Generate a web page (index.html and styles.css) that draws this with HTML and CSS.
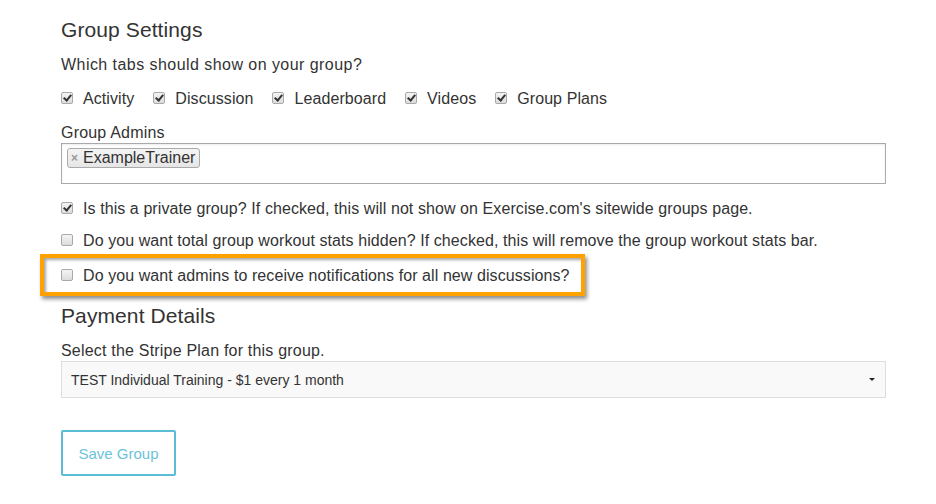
FILE: index.html
```html
<!DOCTYPE html>
<html>
<head>
<meta charset="utf-8">
<link rel="stylesheet" href="styles.css">
</head>
<body>
<div class="page">
  <h2 class="title">Group Settings</h2>
  <p class="label intro">Which tabs should show on your group?</p>
  <div class="tabs">
    <label class="check"><span class="box on"></span>Activity</label>
    <label class="check"><span class="box on"></span>Discussion</label>
    <label class="check"><span class="box on"></span>Leaderboard</label>
    <label class="check"><span class="box on"></span>Videos</label>
    <label class="check"><span class="box on"></span>Group Plans</label>
  </div>
  <p class="label admins">Group Admins</p>
  <div class="tagbox">
    <span class="tag"><span class="x">×</span>ExampleTrainer</span>
  </div>
  <label class="check row r1"><span class="box on"></span>Is this a private group? If checked, this will not show on Exercise.com's sitewide groups page.</label>
  <label class="check row r2"><span class="box"></span>Do you want total group workout stats hidden? If checked, this will remove the group workout stats bar.</label>
  <div class="highlight">
    <label class="check row"><span class="box"></span>Do you want admins to receive notifications for all new discussions?</label>
  </div>
  <h2 class="title pay">Payment Details</h2>
  <p class="label stripe">Select the Stripe Plan for this group.</p>
  <div class="select">
    <span>TEST Individual Training - $1 every 1 month</span>
    <span class="caret"></span>
  </div>
  <button class="save">Save Group</button>
</div>
</body>
</html>
```
FILE: styles.css
```css
* { box-sizing: border-box; }
body {
  margin: 0;
  background: #fff;
  font-family: "Liberation Sans", Arial, sans-serif;
  color: #333;
}
.page {
  padding: 15px 50px 0 61px;
}
.title {
  margin: 0;
  font-size: 21px;
  font-weight: normal;
  line-height: 30px;
  color: #333;
  letter-spacing: 0.1px;
}
.label {
  margin: 0;
  font-size: 16px;
  line-height: 20px;
  letter-spacing: 0.2px;
}
.intro { letter-spacing: 0.45px; }
.title + .label { margin-top: 10px; }
.tabs {
  display: flex;
  gap: 19px;
  margin-top: 14px;
  height: 20px;
}
.check {
  display: flex;
  align-items: center;
  font-size: 16px;
  line-height: 20px;
  letter-spacing: 0.08px;
}
.box {
  width: 12px;
  height: 12px;
  border: 1px solid #a9a9a9;
  border-radius: 2px;
  background: linear-gradient(#f4f4f4, #dcdcdc);
  margin-right: 10px;
  margin-top: -2px;
  position: relative;
  flex: none;
}
.box.on::after {
  content: "";
  position: absolute;
  left: 3px;
  top: 0px;
  width: 3px;
  height: 6px;
  border: solid #333;
  border-width: 0 2px 2px 0;
  transform: rotate(40deg);
}
.admins { margin-top: 14px; }
.tagbox {
  margin-top: 0;
  height: 41px;
  border: 1px solid #aaa;
  padding: 4px 5px;
  box-shadow: inset 0 1px 2px rgba(0,0,0,.08);
}
.tag {
  display: inline-flex;
  align-items: center;
  height: 20px;
  padding: 0 4px 0 3px;
  border: 1px solid #aaa;
  border-radius: 3px;
  background: linear-gradient(#f4f4f4, #e6e6e6);
  font-size: 16px;
  color: #333;
}
.tag .x {
  color: #999;
  font-weight: bold;
  font-size: 12px;
  margin-right: 5px;
}
.row { height: 20px; }
.r1 { margin-top: 15px; }
.r2 { margin-top: 12px; }
.highlight {
  margin: 3px 0 0 -21px;
  width: 545px;
  height: 42px;
  border: 4px solid #ffa200;
  padding: 8px 0 0 17px;
  box-shadow: 2px 3px 4px rgba(0,0,0,.45), inset 2px 2px 3px rgba(0,0,0,.35);
}
.pay { margin-top: 5px; }
.stripe { margin-top: 13px; }
.select {
  margin-top: 0;
  height: 37px;
  border: 1px solid #ddd;
  background: #f9f9f9;
  display: flex;
  align-items: center;
  justify-content: space-between;
  padding: 0 10px 0 9px;
  font-size: 14px;
}
.caret {
  width: 0;
  height: 0;
  border-left: 3px solid transparent;
  border-right: 3px solid transparent;
  border-top: 3px solid #222;
}
.save {
  display: block;
  margin-top: 32px;
  width: 115px;
  height: 46px;
  border: 2px solid #5bbdd4;
  border-radius: 2px;
  background: #fff;
  color: #6cc3d9;
  font-family: "Liberation Sans", Arial, sans-serif;
  font-size: 15px;
  padding: 0;
}
```
